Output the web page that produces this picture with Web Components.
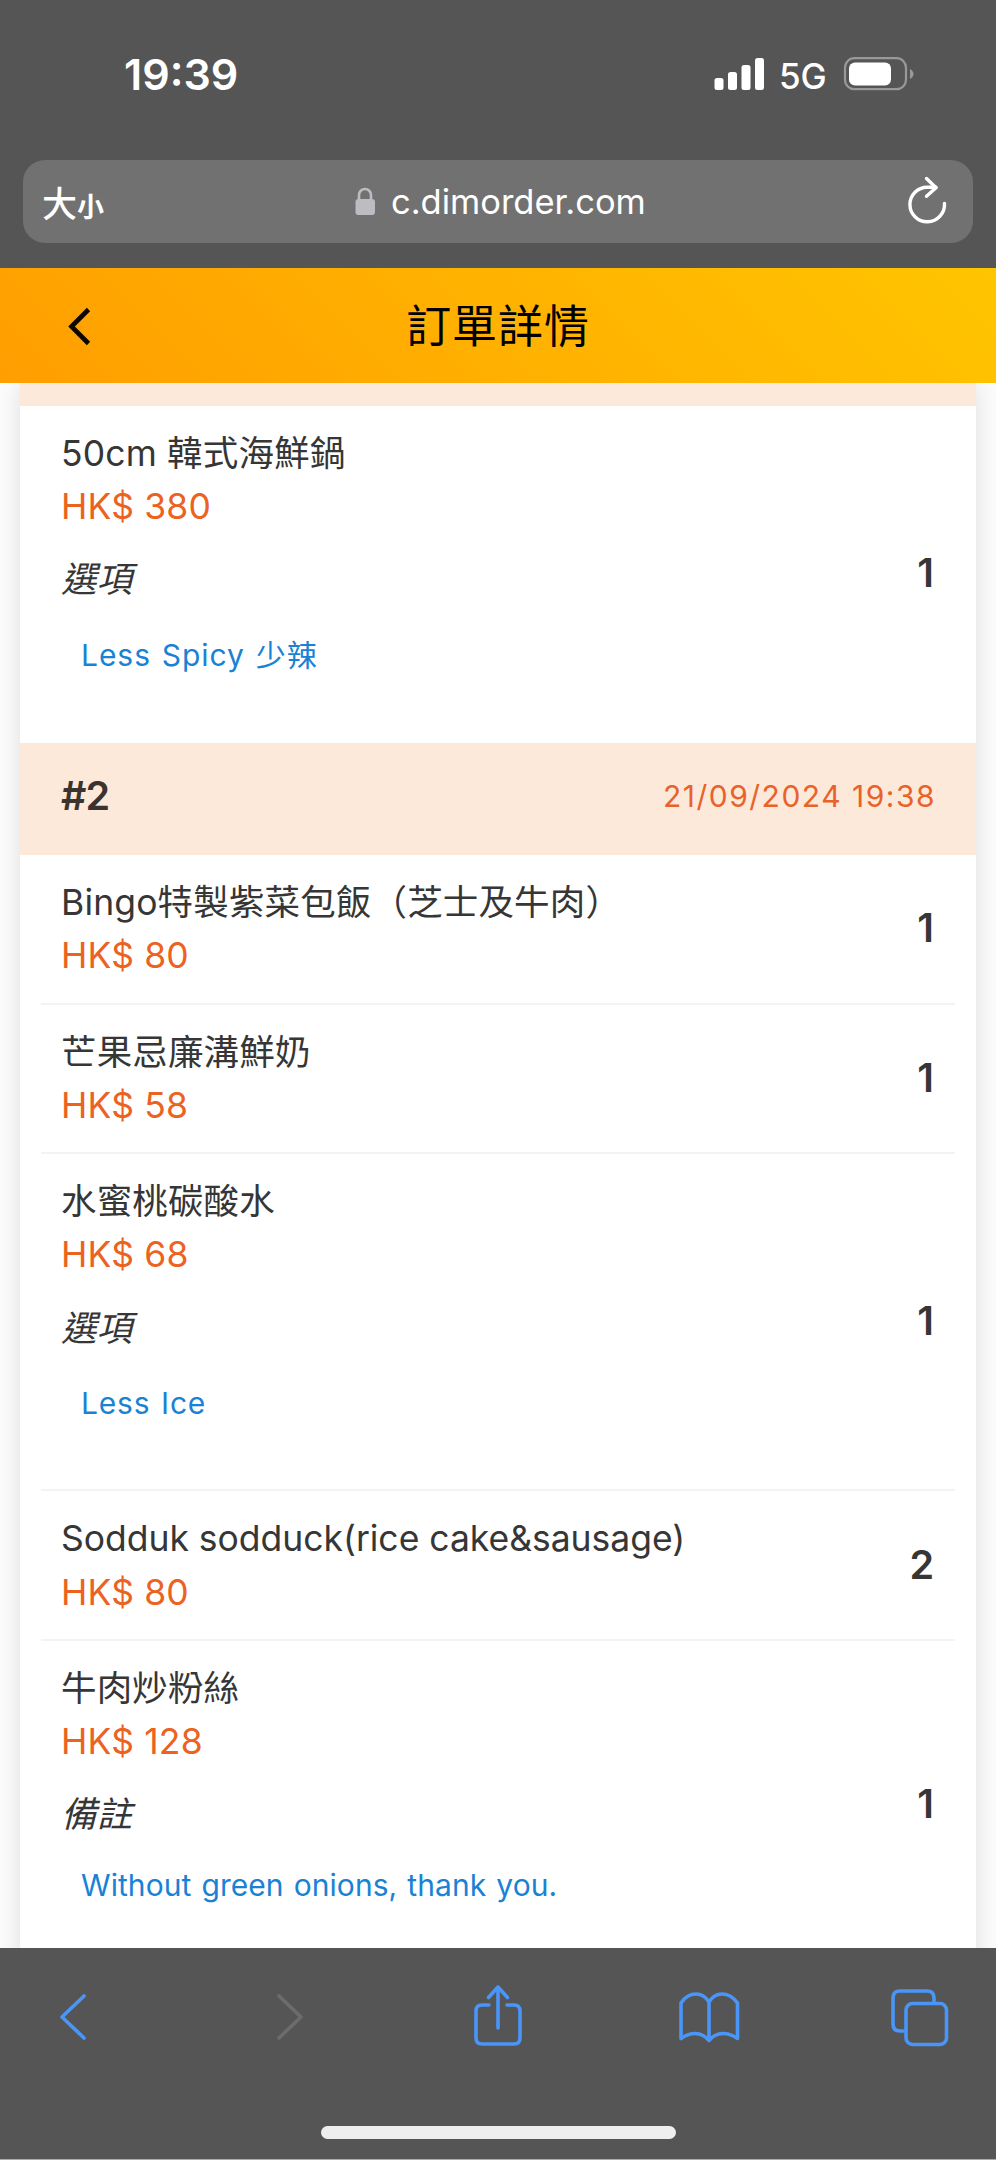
<!DOCTYPE html>
<html lang="zh-Hant">
<head>
<meta charset="utf-8">
<title>訂單詳情</title>
<style>
  html, body { margin: 0; padding: 0; background: #fff; }
  body { width: 996px; height: 2160px; overflow: hidden; font-family: Inter, "Noto Sans CJK TC", sans-serif; }
</style>
</head>
<body>
<phone-screen>
  <status-bar slot="top" time="19:39" network="5G"></status-bar>
  <address-bar slot="top">c.dimorder.com</address-bar>
  <app-header slot="top">訂單詳情</app-header>
  <order-card>
    <batch-header class="cut"></batch-header>
    <order-item price="380" qty="1" last style="--name-ls:.15px;--note-ls:.95px"><span>50cm 韓式海鮮鍋</span><span slot="label">選項</span><span slot="note">Less Spicy 少辣</span></order-item>
    <batch-header number="#2" date="21/09/2024 19:38"></batch-header>
    <order-item price="80" qty="1"><span>Bingo特製紫菜包飯（芝士及牛肉）</span></order-item>
    <order-item price="58" qty="1"><span>芒果忌廉溝鮮奶</span></order-item>
    <order-item price="68" qty="1"><span>水蜜桃碳酸水</span><span slot="label">選項</span><span slot="note">Less Ice</span></order-item>
    <order-item price="80" qty="2" style="--name-ls:-.02px"><span>Sodduk sodduck(rice cake&amp;sausage)</span></order-item>
    <order-item price="128" qty="1" remark last style="--note-ls:.07px"><span>牛肉炒粉絲</span><span slot="label">備註</span><span slot="note">Without green onions, thank you.</span></order-item>
  </order-card>
  <browser-toolbar slot="bottom"></browser-toolbar>
</phone-screen>

<script>
const define = (name, html, setup) => customElements.define(name, class extends HTMLElement {
  constructor() {
    super();
    this.attachShadow({ mode: 'open' }).innerHTML = html;
  }
  connectedCallback() {
    if (setup) setup(this, s => this.shadowRoot.querySelector(s));
  }
});

define('phone-screen', `
  <style>
    :host { display: flex; flex-direction: column; width: 996px; height: 2160px; overflow: hidden; }
    main { flex: 1; min-height: 0; overflow: hidden; background: #fcfcfc; padding: 0 20px; }
  </style>
  <slot name="top"></slot><main><slot></slot></main><slot name="bottom"></slot>`);

define('status-bar', `
  <style>
    :host { display: flex; height: 160px; background: #555; color: #fff; box-sizing: border-box; padding: 44px 82px 0 124px; }
    .time { font-size: 43px; font-weight: 600; line-height: 61px; flex: 1; }
    .net { font-size: 35px; font-weight: 450; line-height: 64px; width: 64px; letter-spacing: -.2px; }
    svg { display: block; }
  </style>
  <span class="time"></span>
  <svg width="65" height="61" viewBox="714 44 65 61" fill="#fff">
    <rect x="714.5" y="78" width="9" height="12" rx="2.5"/><rect x="728" y="72" width="9" height="18" rx="2.5"/>
    <rect x="741.5" y="65" width="9" height="25" rx="2.5"/><rect x="755" y="58" width="9" height="32" rx="2.5"/>
  </svg>
  <span class="net"></span>
  <svg width="71" height="61" viewBox="843 44 71 61">
    <rect x="845" y="58.2" width="61" height="31" rx="9.5" fill="none" stroke="#999" stroke-width="2.2"/>
    <rect x="849" y="62.5" width="42" height="23" rx="6" fill="#fff"/>
    <path d="M910 69v10q3.500-2 3.500-5t-3.500-5z" fill="#999"/>
  </svg>`, (el, $) => {
    $('.time').textContent = el.getAttribute('time');
    $('.net').textContent = el.getAttribute('network');
  });

define('address-bar', `
  <style>
    :host { display: block; height: 108px; background: #555; box-sizing: border-box; padding: 0 23px; }
    .field { height: 83px; border-radius: 22px; background: #717171; color: #fff; display: flex; line-height: 83px; }
    .size { width: 331px; padding-left: 19px; font-family: "Noto Sans CJK TC", sans-serif; font-weight: 500; font-size: 35px; box-sizing: border-box; }
    small { font-size: 27px; font-weight: 700; }
    .url { flex: 1; font-size: 34.5px; padding-left: 15px; letter-spacing: -.02px; }
    svg { display: block; }
  </style>
  <div class="field">
    <span class="size">大<small>小</small></span>
    <svg width="22" height="83" viewBox="354 160 22 83"><rect x="355.500" y="199" width="19.500" height="16" rx="3" fill="#bdbdc1"/><path d="M359 200v-5a6 6 0 0 1 12 0v5" fill="none" stroke="#bdbdc1" stroke-width="2.600"/></svg>
    <span class="url"><slot></slot></span>
    <svg width="70" height="83" viewBox="903 160 70 83" fill="none" stroke="#fff" stroke-width="3.400" stroke-linecap="round" stroke-linejoin="round"><path d="M944.500 203.500A17.300 17.300 0 1 1 927.500 187.200H936"/><path d="M926.500 178.500l9.500 9.300-9.500 8.500"/></svg>
  </div>`);

define('app-header', `
  <style>
    :host { display: flex; height: 115px; background: linear-gradient(45deg, #ff9e00, #ffc500); color: #000; }
    h1 { margin: 0 0 0 -4px; width: 820px; text-align: center; font-size: 45px; font-weight: 400; letter-spacing: .9px; line-height: 117px; }
    svg { display: block; }
  </style>
  <svg width="92" height="115" viewBox="0 268 92 115"><path d="M88.500 309.500L71.500 326.500L88.500 343.500" fill="none" stroke="#0c0800" stroke-width="4.600"/></svg>
  <h1><slot></slot></h1>`);

define('order-card', `
  <style>
    :host { display: block; width: 956px; height: 1600px; background: #fff; box-shadow: 0 0 24px rgba(0,0,0,.12); }
  </style>
  <slot></slot>`);

define('batch-header', `
  <style>
    :host { display: flex; justify-content: space-between; height: 112.250px; box-sizing: border-box; padding: 0 40px 0 41px; background: #fce9da; line-height: 107px; }
    :host(.cut) { height: 22.500px; }
    b { font-size: 39.500px; font-weight: 600; color: #3b332d; letter-spacing: -1px; }
    span { font-size: 30px; font-weight: 390; color: #e8622a; letter-spacing: 1.500px; }
  </style>
  <b></b><span></span>`, (el, $) => {
    $('b').textContent = el.getAttribute('number') || '';
    $('span').textContent = el.getAttribute('date') || '';
  });

define('order-item', `
  <style>
    :host { display: block; padding: 0 21px; color: #363636; font-weight: 375; }
    .row { display: flex; align-items: center; justify-content: space-between; padding: 21px 21px 20px 20px; border-bottom: 2px solid #f3f3f3; }
    :host([last]) .row { border-color: transparent; }
    .name, .price, .label { font-size: 35.500px; line-height: 53.250px; white-space: nowrap; }
    .name { letter-spacing: var(--name-ls, .15px); }
    .price { color: #ec6220; letter-spacing: .15px; }
    .label { font-style: italic; margin-top: 20px; }
    .note { color: #1a82d4; font-size: 30px; line-height: 46px; margin: 25.500px 0 43px 20px; letter-spacing: var(--note-ls, .8px); word-spacing: 1.500px; white-space: nowrap; }
    :host([remark]) .note { margin: 20px 0 40px 20px; }
    .qty { font-size: 39.500px; line-height: 54px; font-weight: 600; margin-top: -2px; }
    [hidden] { display: none; }
  </style>
  <div class="row">
    <div>
      <div class="name"><slot></slot></div>
      <div class="price"></div>
      <div class="label"><slot name="label"></slot></div>
      <div class="note"><slot name="note"></slot></div>
    </div>
    <div class="qty"></div>
  </div>`, (el, $) => {
    $('.price').textContent = 'HK$ ' + el.getAttribute('price');
    $('.qty').textContent = el.getAttribute('qty');
    const extra = !!el.querySelector('[slot=label]');
    $('.label').hidden = $('.note').hidden = !extra;
  });

define('browser-toolbar', `
  <style>
    :host { display: block; height: 212px; background: #555; box-sizing: border-box; border-bottom: 1px solid #aaa; }
    .icons { display: flex; height: 178px; }
    svg { display: block; fill: none; stroke: #4a95f8; stroke-width: 3.600; stroke-linecap: round; stroke-linejoin: round; }
    .home { width: 355px; height: 13px; border-radius: 7px; background: #eee; margin: 0 auto; }
  </style>
  <div class="icons"></div>
  <div class="home"></div>`, (el, $) => {
    const icons = [
      [58, 30, 58, '<path d="M84 1996L62 2017L84 2038"/>'],
      [275, 30, 187, '<path stroke="#6c6c6c" d="M279 1996L301 2017L279 2038"/>'],
      [472, 52, 167, '<path d="M489 2005h-7q-6 0-6 6v27q0 6 6 6h32q6 0 6-6v-27q0-6-6-6h-7M498 2028v-40M488.500 1997.500l9.500-10.500 9.500 10.500"/>'],
      [677, 64, 153, '<path d="M681 2038.500V2003q6-9 15-9 8 0 13 8 5-8 13-8 9 0 15.500 9v35.500q-7-5-14.500-5-8 0-14 7-6-7-14-7-7 0-14 5zM709 2002v38"/>'],
      [889, 61, 148, '<path d="M903 2031h-3q-7 0-7-7v-26q0-7 7-7h27q7 0 7 7v4"/><rect x="906" y="2003.500" width="40.500" height="41" rx="6.500"/>']
    ];
    $('.icons').innerHTML = icons.map(([x, w, m, p]) => `<svg style="margin-left:${m}px" width="${w}" height="178" viewBox="${x} 1948 ${w} 178">${p}</svg>`).join('');
  });
</script>
</body>
</html>
